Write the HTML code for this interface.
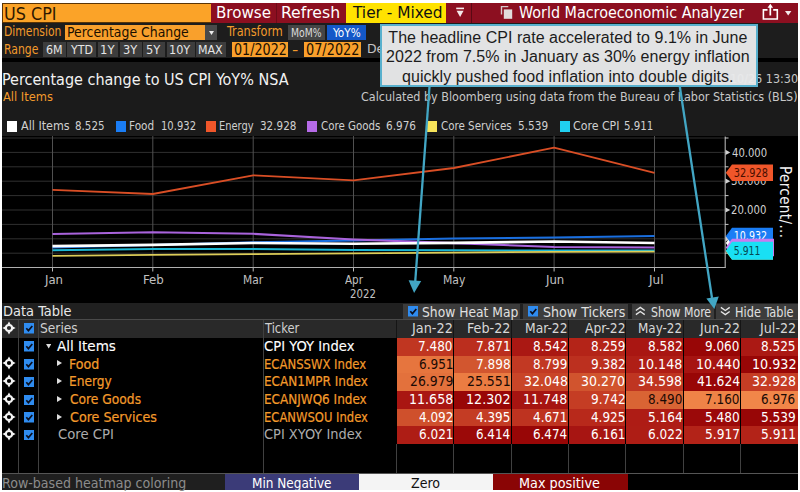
<!DOCTYPE html>
<html><head><meta charset="utf-8"><title>US CPI</title>
<style>
html,body{margin:0;padding:0;background:#fff;}
body{width:800px;height:492px;position:relative;overflow:hidden;font-family:"DejaVu Sans Condensed","Liberation Sans",sans-serif;}
#app{position:absolute;left:2px;top:2.6px;width:796px;height:487.4px;background:#000;}
.b{position:absolute;display:block;}
.t{position:absolute;white-space:nowrap;height:20px;line-height:20px;font-family:"DejaVu Sans Condensed","Liberation Sans",sans-serif;transform-origin:0 50%;}
#note{position:absolute;left:380.3px;top:24px;width:371.1px;height:56.8px;padding-right:2.4px;letter-spacing:0.03px;border:2px solid #58b0cd;background:rgba(232,233,234,0.97);color:#1c1c1c;font-family:"Liberation Sans",sans-serif;font-size:16px;line-height:19.2px;text-align:center;padding-top:2.2px;box-sizing:content-box;}
</style></head><body>
<div id="app"></div>
<!-- title bar -->
<div class="b" style="left:2px;top:2.6px;width:209px;height:20px;background:#5a3405"></div>
<div class="b" style="left:3px;top:3.6px;width:208px;height:18.7px;background:#fba328"></div>
<div class="b" style="left:211px;top:2.8px;width:587px;height:20.2px;background:#8c0f20"></div>
<div class="b" style="left:276px;top:3px;width:1px;height:20px;background:#6d0b18"></div>
<div class="b" style="left:345.5px;top:3px;width:100.3px;height:20px;background:#ffe200"></div>
<div class="b" style="left:470.5px;top:3px;width:1.2px;height:20px;background:#5a0913"></div>
<!-- toolbar rows -->
<div class="b" style="left:2px;top:22.5px;width:796px;height:35px;background:#1d1d1d"></div>
<div class="b" style="left:211px;top:23px;width:587px;height:1px;background:#1d1d1d"></div>
<div class="b" style="left:65.4px;top:25px;width:140px;height:14.5px;background:#f9a02c"></div>
<div class="b" style="left:205.3px;top:25px;width:11.7px;height:14.5px;background:#4a4a4a"></div>
<svg class="b" style="left:208.6px;top:31px" width="5" height="4" viewBox="0 0 5 4"><path d="M0 0H5L2.5 4Z" fill="#eee"/></svg>
<div class="b" style="left:287.5px;top:25px;width:37.3px;height:14.5px;background:#454545"></div>
<div class="b" style="left:327px;top:25px;width:39.3px;height:14.5px;background:#1458c8"></div>
<div class="b" style="left:42.6px;top:42px;width:23.2px;height:14.5px;background:#3d3d3d"></div>
<div class="b" style="left:67.3px;top:42px;width:28.7px;height:14.5px;background:#3d3d3d"></div>
<div class="b" style="left:97.6px;top:42px;width:20.8px;height:14.5px;background:#3d3d3d"></div>
<div class="b" style="left:120.0px;top:42px;width:21.5px;height:14.5px;background:#3d3d3d"></div>
<div class="b" style="left:143.3px;top:42px;width:21.5px;height:14.5px;background:#3d3d3d"></div>
<div class="b" style="left:166.5px;top:42px;width:28.0px;height:14.5px;background:#3d3d3d"></div>
<div class="b" style="left:196.0px;top:42px;width:30.0px;height:14.5px;background:#3d3d3d"></div>
<div class="b" style="left:232.4px;top:42px;width:55.2px;height:15px;background:#f9a02c"></div>
<div class="b" style="left:304.4px;top:42px;width:56.4px;height:15px;background:#f9a02c"></div>
<!-- chart header -->
<div class="b" style="left:2px;top:62px;width:796px;height:74px;background:#1b1b1b"></div>
<div class="b" style="left:7.4px;top:121px;width:10px;height:10.5px;background:#ffffff"></div>
<div class="b" style="left:115.5px;top:121px;width:10px;height:10.5px;background:#1a7df5"></div>
<div class="b" style="left:206.3px;top:121px;width:10px;height:10.5px;background:#f0562a"></div>
<div class="b" style="left:307.3px;top:121px;width:10px;height:10.5px;background:#b66be8"></div>
<div class="b" style="left:427.3px;top:121px;width:10px;height:10.5px;background:#f7e45a"></div>
<div class="b" style="left:560.0px;top:121px;width:10px;height:10.5px;background:#20d0f0"></div>
<!-- top icons -->
<svg class="b" style="left:455px;top:6px" width="11" height="13" viewBox="0 0 11 13"><rect x="1.2" y="1.6" width="7.8" height="1.6" fill="#f4e9ea"/><path d="M1.6 4.8H8.6L5.1 11Z" fill="#f4e9ea"/></svg>
<svg class="b" style="left:500px;top:5px" width="14" height="15" viewBox="0 0 14 15"><path d="M1.5 9.5V1.6H8.3" fill="none" stroke="#d9c9cb" stroke-width="1.4"/><rect x="3.8" y="4.4" width="8.4" height="9.4" fill="#e2dcdc"/></svg>
<svg class="b" style="left:761px;top:3px" width="19" height="18" viewBox="0 0 19 18"><path d="M6.5 6.9H2.4V16H16.3V6.9H12.2" fill="none" stroke="#fff" stroke-width="1.6"/><path d="M9.3 12.5V3.5" stroke="#fff" stroke-width="1.7"/><path d="M6.5 4.8L9.3 0.8L12.1 4.8Z" fill="#fff"/></svg>
<svg class="b" style="left:785px;top:11px" width="7" height="5" viewBox="0 0 7 5"><path d="M0 0H6.4L3.2 4.6Z" fill="#f4e9ea"/></svg>
<!-- data table -->
<div class="b" style="left:2px;top:302.5px;width:796px;height:17px;background:#202020"></div>
<div class="b" style="left:403.4px;top:304px;width:116.6px;height:15px;background:#3c3c3c"></div>
<div class="b" style="left:522.8px;top:304px;width:105.5px;height:15px;background:#3c3c3c"></div>
<div class="b" style="left:631.8px;top:304px;width:82px;height:15px;background:#3c3c3c"></div>
<div class="b" style="left:716.3px;top:304px;width:81.7px;height:15px;background:#3c3c3c"></div>
<div class="b" style="left:2px;top:319.4px;width:796px;height:1px;background:#4a4a4a"></div>
<div class="b" style="left:2px;top:320.4px;width:796px;height:17.4px;background:#292929"></div>
<div class="b" style="left:397.0px;top:338.0px;width:56.4px;height:18.0px;background:rgb(192,54,33)"></div>
<div class="b" style="left:454.4px;top:338.0px;width:56.4px;height:18.0px;background:rgb(187,46,30)"></div>
<div class="b" style="left:511.7px;top:338.0px;width:56.4px;height:18.0px;background:rgb(170,24,19)"></div>
<div class="b" style="left:569.1px;top:338.0px;width:56.4px;height:18.0px;background:rgb(180,36,24)"></div>
<div class="b" style="left:626.4px;top:338.0px;width:56.4px;height:18.0px;background:rgb(169,22,18)"></div>
<div class="b" style="left:683.8px;top:338.0px;width:56.4px;height:18.0px;background:rgb(152,6,6)"></div>
<div class="b" style="left:741.2px;top:338.0px;width:56.4px;height:18.0px;background:rgb(171,25,20)"></div>
<div class="b" style="left:397.0px;top:355.7px;width:56.4px;height:18.0px;background:rgb(230,117,62)"></div>
<div class="b" style="left:454.4px;top:355.7px;width:56.4px;height:18.0px;background:rgb(210,86,47)"></div>
<div class="b" style="left:511.7px;top:355.7px;width:56.4px;height:18.0px;background:rgb(194,57,35)"></div>
<div class="b" style="left:569.1px;top:355.7px;width:56.4px;height:18.0px;background:rgb(188,48,31)"></div>
<div class="b" style="left:626.4px;top:355.7px;width:56.4px;height:18.0px;background:rgb(175,30,22)"></div>
<div class="b" style="left:683.8px;top:355.7px;width:56.4px;height:18.0px;background:rgb(166,20,17)"></div>
<div class="b" style="left:741.2px;top:355.7px;width:56.4px;height:18.0px;background:rgb(152,6,6)"></div>
<div class="b" style="left:397.0px;top:373.4px;width:56.4px;height:18.0px;background:rgb(227,113,60)"></div>
<div class="b" style="left:454.4px;top:373.4px;width:56.4px;height:18.0px;background:rgb(235,124,66)"></div>
<div class="b" style="left:511.7px;top:373.4px;width:56.4px;height:18.0px;background:rgb(201,69,40)"></div>
<div class="b" style="left:569.1px;top:373.4px;width:56.4px;height:18.0px;background:rgb(209,84,46)"></div>
<div class="b" style="left:626.4px;top:373.4px;width:56.4px;height:18.0px;background:rgb(191,53,33)"></div>
<div class="b" style="left:683.8px;top:373.4px;width:56.4px;height:18.0px;background:rgb(152,6,6)"></div>
<div class="b" style="left:741.2px;top:373.4px;width:56.4px;height:18.0px;background:rgb(197,61,36)"></div>
<div class="b" style="left:397.0px;top:391.0px;width:56.4px;height:18.0px;background:rgb(169,22,18)"></div>
<div class="b" style="left:454.4px;top:391.0px;width:56.4px;height:18.0px;background:rgb(152,6,6)"></div>
<div class="b" style="left:511.7px;top:391.0px;width:56.4px;height:18.0px;background:rgb(166,20,17)"></div>
<div class="b" style="left:569.1px;top:391.0px;width:56.4px;height:18.0px;background:rgb(197,61,36)"></div>
<div class="b" style="left:626.4px;top:391.0px;width:56.4px;height:18.0px;background:rgb(217,100,52)"></div>
<div class="b" style="left:683.8px;top:391.0px;width:56.4px;height:18.0px;background:rgb(239,131,71)"></div>
<div class="b" style="left:741.2px;top:391.0px;width:56.4px;height:18.0px;background:rgb(241,134,73)"></div>
<div class="b" style="left:397.0px;top:408.7px;width:56.4px;height:18.0px;background:rgb(207,80,44)"></div>
<div class="b" style="left:454.4px;top:408.7px;width:56.4px;height:18.0px;background:rgb(196,60,36)"></div>
<div class="b" style="left:511.7px;top:408.7px;width:56.4px;height:18.0px;background:rgb(190,51,32)"></div>
<div class="b" style="left:569.1px;top:408.7px;width:56.4px;height:18.0px;background:rgb(184,41,27)"></div>
<div class="b" style="left:626.4px;top:408.7px;width:56.4px;height:18.0px;background:rgb(174,28,21)"></div>
<div class="b" style="left:683.8px;top:408.7px;width:56.4px;height:18.0px;background:rgb(155,9,9)"></div>
<div class="b" style="left:741.2px;top:408.7px;width:56.4px;height:18.0px;background:rgb(152,6,6)"></div>
<div class="b" style="left:397.0px;top:426.4px;width:56.4px;height:18.0px;background:rgb(174,29,21)"></div>
<div class="b" style="left:454.4px;top:426.4px;width:56.4px;height:18.0px;background:rgb(155,9,8)"></div>
<div class="b" style="left:511.7px;top:426.4px;width:56.4px;height:18.0px;background:rgb(152,6,6)"></div>
<div class="b" style="left:569.1px;top:426.4px;width:56.4px;height:18.0px;background:rgb(167,21,18)"></div>
<div class="b" style="left:626.4px;top:426.4px;width:56.4px;height:18.0px;background:rgb(174,29,21)"></div>
<div class="b" style="left:683.8px;top:426.4px;width:56.4px;height:18.0px;background:rgb(179,35,24)"></div>
<div class="b" style="left:741.2px;top:426.4px;width:56.4px;height:18.0px;background:rgb(179,35,24)"></div>
<div class="b" style="left:17.8px;top:320px;width:1px;height:153px;background:#404040"></div>
<div class="b" style="left:38.4px;top:320px;width:1px;height:153px;background:#404040"></div>
<div class="b" style="left:262.7px;top:320px;width:1px;height:153px;background:#404040"></div>
<div class="b" style="left:396.0px;top:320px;width:1px;height:18px;background:#151515"></div>
<div class="b" style="left:396.0px;top:444px;width:1px;height:29px;background:#404040"></div>
<div class="b" style="left:453.4px;top:320px;width:1px;height:18px;background:#151515"></div>
<div class="b" style="left:453.4px;top:444px;width:1px;height:29px;background:#404040"></div>
<div class="b" style="left:510.7px;top:320px;width:1px;height:18px;background:#151515"></div>
<div class="b" style="left:510.7px;top:444px;width:1px;height:29px;background:#404040"></div>
<div class="b" style="left:568.1px;top:320px;width:1px;height:18px;background:#151515"></div>
<div class="b" style="left:568.1px;top:444px;width:1px;height:29px;background:#404040"></div>
<div class="b" style="left:625.4px;top:320px;width:1px;height:18px;background:#151515"></div>
<div class="b" style="left:625.4px;top:444px;width:1px;height:29px;background:#404040"></div>
<div class="b" style="left:682.8px;top:320px;width:1px;height:18px;background:#151515"></div>
<div class="b" style="left:682.8px;top:444px;width:1px;height:29px;background:#404040"></div>
<div class="b" style="left:740.2px;top:320px;width:1px;height:18px;background:#151515"></div>
<div class="b" style="left:740.2px;top:444px;width:1px;height:29px;background:#404040"></div>
<svg class="b" style="left:23.8px;top:323.2px" width="10.5" height="10.5" viewBox="0 0 10.5 10.5"><rect width="10.5" height="10.5" fill="#2f8cf0"/><path d="M2.3 5.3 L4.4 7.6 L8.3 3" fill="none" stroke="#0a1020" stroke-width="1.7"/></svg>
<svg class="b" style="left:2.3px;top:321.2px" width="14" height="14" viewBox="-7 -7 14 14"><circle r="3.1" fill="none" stroke="#f4f4f4" stroke-width="2"/><path d="M0 -6.6 L1.7 -3.4 H-1.7Z M0 6.6 L1.7 3.4 H-1.7Z M-6.6 0 L-3.4 1.7 V-1.7Z M6.6 0 L3.4 1.7 V-1.7Z" fill="#f4f4f4"/></svg>
<svg class="b" style="left:23.8px;top:341.4px" width="10.5" height="10.5" viewBox="0 0 10.5 10.5"><rect width="10.5" height="10.5" fill="#2f8cf0"/><path d="M2.3 5.3 L4.4 7.6 L8.3 3" fill="none" stroke="#0a1020" stroke-width="1.7"/></svg>
<svg class="b" style="left:23.8px;top:359.1px" width="10.5" height="10.5" viewBox="0 0 10.5 10.5"><rect width="10.5" height="10.5" fill="#2f8cf0"/><path d="M2.3 5.3 L4.4 7.6 L8.3 3" fill="none" stroke="#0a1020" stroke-width="1.7"/></svg>
<svg class="b" style="left:2.3px;top:356.4px" width="14" height="14" viewBox="-7 -7 14 14"><circle r="3.1" fill="none" stroke="#f4f4f4" stroke-width="2"/><path d="M0 -6.6 L1.7 -3.4 H-1.7Z M0 6.6 L1.7 3.4 H-1.7Z M-6.6 0 L-3.4 1.7 V-1.7Z M6.6 0 L3.4 1.7 V-1.7Z" fill="#f4f4f4"/></svg>
<svg class="b" style="left:23.8px;top:376.8px" width="10.5" height="10.5" viewBox="0 0 10.5 10.5"><rect width="10.5" height="10.5" fill="#2f8cf0"/><path d="M2.3 5.3 L4.4 7.6 L8.3 3" fill="none" stroke="#0a1020" stroke-width="1.7"/></svg>
<svg class="b" style="left:2.3px;top:374.1px" width="14" height="14" viewBox="-7 -7 14 14"><circle r="3.1" fill="none" stroke="#f4f4f4" stroke-width="2"/><path d="M0 -6.6 L1.7 -3.4 H-1.7Z M0 6.6 L1.7 3.4 H-1.7Z M-6.6 0 L-3.4 1.7 V-1.7Z M6.6 0 L3.4 1.7 V-1.7Z" fill="#f4f4f4"/></svg>
<svg class="b" style="left:23.8px;top:394.5px" width="10.5" height="10.5" viewBox="0 0 10.5 10.5"><rect width="10.5" height="10.5" fill="#2f8cf0"/><path d="M2.3 5.3 L4.4 7.6 L8.3 3" fill="none" stroke="#0a1020" stroke-width="1.7"/></svg>
<svg class="b" style="left:2.3px;top:391.8px" width="14" height="14" viewBox="-7 -7 14 14"><circle r="3.1" fill="none" stroke="#f4f4f4" stroke-width="2"/><path d="M0 -6.6 L1.7 -3.4 H-1.7Z M0 6.6 L1.7 3.4 H-1.7Z M-6.6 0 L-3.4 1.7 V-1.7Z M6.6 0 L3.4 1.7 V-1.7Z" fill="#f4f4f4"/></svg>
<svg class="b" style="left:23.8px;top:412.2px" width="10.5" height="10.5" viewBox="0 0 10.5 10.5"><rect width="10.5" height="10.5" fill="#2f8cf0"/><path d="M2.3 5.3 L4.4 7.6 L8.3 3" fill="none" stroke="#0a1020" stroke-width="1.7"/></svg>
<svg class="b" style="left:2.3px;top:409.5px" width="14" height="14" viewBox="-7 -7 14 14"><circle r="3.1" fill="none" stroke="#f4f4f4" stroke-width="2"/><path d="M0 -6.6 L1.7 -3.4 H-1.7Z M0 6.6 L1.7 3.4 H-1.7Z M-6.6 0 L-3.4 1.7 V-1.7Z M6.6 0 L3.4 1.7 V-1.7Z" fill="#f4f4f4"/></svg>
<svg class="b" style="left:23.8px;top:429.8px" width="10.5" height="10.5" viewBox="0 0 10.5 10.5"><rect width="10.5" height="10.5" fill="#2f8cf0"/><path d="M2.3 5.3 L4.4 7.6 L8.3 3" fill="none" stroke="#0a1020" stroke-width="1.7"/></svg>
<svg class="b" style="left:2.3px;top:427.1px" width="14" height="14" viewBox="-7 -7 14 14"><circle r="3.1" fill="none" stroke="#f4f4f4" stroke-width="2"/><path d="M0 -6.6 L1.7 -3.4 H-1.7Z M0 6.6 L1.7 3.4 H-1.7Z M-6.6 0 L-3.4 1.7 V-1.7Z M6.6 0 L3.4 1.7 V-1.7Z" fill="#f4f4f4"/></svg>
<svg class="b" style="left:407.5px;top:306.3px" width="10.5" height="10.5" viewBox="0 0 10.5 10.5"><rect width="10.5" height="10.5" fill="#2f8cf0"/><path d="M2.3 5.3 L4.4 7.6 L8.3 3" fill="none" stroke="#0a1020" stroke-width="1.7"/></svg>
<svg class="b" style="left:527.5px;top:306.3px" width="10.5" height="10.5" viewBox="0 0 10.5 10.5"><rect width="10.5" height="10.5" fill="#2f8cf0"/><path d="M2.3 5.3 L4.4 7.6 L8.3 3" fill="none" stroke="#0a1020" stroke-width="1.7"/></svg>
<svg class="b" style="left:45.6px;top:344.3px" width="5.4" height="4.4" viewBox="0 0 6 5"><path d="M0 0H6L3 5Z" fill="#ddd"/></svg>
<svg class="b" style="left:57.3px;top:360.4px" width="5" height="6" viewBox="0 0 5 6"><path d="M0 0V6L5 3Z" fill="#ddd"/></svg>
<svg class="b" style="left:57.3px;top:378.1px" width="5" height="6" viewBox="0 0 5 6"><path d="M0 0V6L5 3Z" fill="#ddd"/></svg>
<svg class="b" style="left:57.3px;top:395.8px" width="5" height="6" viewBox="0 0 5 6"><path d="M0 0V6L5 3Z" fill="#ddd"/></svg>
<svg class="b" style="left:57.3px;top:413.5px" width="5" height="6" viewBox="0 0 5 6"><path d="M0 0V6L5 3Z" fill="#ddd"/></svg>
<svg class="b" style="left:635.2px;top:306.3px" width="10.6" height="10" viewBox="0 0 12 11"><path d="M1 5L6 1.4L11 5M1 9.6L6 6L11 9.6" fill="none" stroke="#e6e6e6" stroke-width="1.5"/></svg>
<svg class="b" style="left:720px;top:306.3px" width="10.6" height="10" viewBox="0 0 12 11"><path d="M1 1.4L6 5L11 1.4M1 6L6 9.6L11 6" fill="none" stroke="#e6e6e6" stroke-width="1.5"/></svg>
<!-- footer -->
<div class="b" style="left:2px;top:472.6px;width:796px;height:1px;background:#555"></div>
<div class="b" style="left:2px;top:473.6px;width:223px;height:16.4px;background:#1f1f1f"></div>
<div class="b" style="left:225px;top:474.4px;width:133.6px;height:15.4px;background:#3b3b78"></div>
<div class="b" style="left:358.6px;top:474.4px;width:134px;height:15.4px;background:#f4f4f4"></div>
<div class="b" style="left:492.6px;top:474.4px;width:135px;height:15.4px;background:#8a0505"></div>
<!-- chart -->
<svg class="b" style="left:0;top:0" width="800" height="492" viewBox="0 0 800 492">
<line x1="2" x2="725" y1="253.2" y2="253.2" stroke="#303030" stroke-width="1"/>
<line x1="2" x2="725" y1="238.8" y2="238.8" stroke="#303030" stroke-width="1"/>
<line x1="2" x2="725" y1="224.4" y2="224.4" stroke="#303030" stroke-width="1"/>
<line x1="2" x2="725" y1="210.0" y2="210.0" stroke="#303030" stroke-width="1"/>
<line x1="2" x2="725" y1="195.6" y2="195.6" stroke="#303030" stroke-width="1"/>
<line x1="2" x2="725" y1="181.2" y2="181.2" stroke="#303030" stroke-width="1"/>
<line x1="2" x2="725" y1="166.8" y2="166.8" stroke="#303030" stroke-width="1"/>
<line x1="2" x2="725" y1="152.4" y2="152.4" stroke="#303030" stroke-width="1"/>
<line x1="2" x2="725" y1="138.0" y2="138.0" stroke="#303030" stroke-width="1"/>
<line x1="52.5" x2="52.5" y1="136" y2="267.5" stroke="#505050" stroke-width="1"/>
<line x1="52.5" x2="52.5" y1="267.5" y2="271.5" stroke="#bbb" stroke-width="1"/>
<line x1="152.8" x2="152.8" y1="136" y2="267.5" stroke="#505050" stroke-width="1"/>
<line x1="152.8" x2="152.8" y1="267.5" y2="271.5" stroke="#bbb" stroke-width="1"/>
<line x1="253.2" x2="253.2" y1="136" y2="267.5" stroke="#505050" stroke-width="1"/>
<line x1="253.2" x2="253.2" y1="267.5" y2="271.5" stroke="#bbb" stroke-width="1"/>
<line x1="353.5" x2="353.5" y1="136" y2="267.5" stroke="#505050" stroke-width="1"/>
<line x1="353.5" x2="353.5" y1="267.5" y2="271.5" stroke="#bbb" stroke-width="1"/>
<line x1="453.8" x2="453.8" y1="136" y2="267.5" stroke="#505050" stroke-width="1"/>
<line x1="453.8" x2="453.8" y1="267.5" y2="271.5" stroke="#bbb" stroke-width="1"/>
<line x1="554.1" x2="554.1" y1="136" y2="267.5" stroke="#505050" stroke-width="1"/>
<line x1="554.1" x2="554.1" y1="267.5" y2="271.5" stroke="#bbb" stroke-width="1"/>
<line x1="654.5" x2="654.5" y1="136" y2="267.5" stroke="#505050" stroke-width="1"/>
<line x1="654.5" x2="654.5" y1="267.5" y2="271.5" stroke="#bbb" stroke-width="1"/>
<polyline points="52.5,250.3 152.8,249.1 253.2,249.0 353.5,249.9 453.8,250.3 554.1,250.6 654.5,250.6" fill="none" stroke="#1cb8d4" stroke-width="2" stroke-linejoin="round"/>
<polyline points="52.5,255.8 152.8,254.9 253.2,254.1 353.5,253.4 453.8,252.7 554.1,251.8 654.5,251.6" fill="none" stroke="#dccc58" stroke-width="1.7" stroke-linejoin="round"/>
<polyline points="52.5,247.6 152.8,244.9 253.2,242.3 353.5,240.6 453.8,238.4 554.1,237.5 654.5,236.1" fill="none" stroke="#1a6fe0" stroke-width="2" stroke-linejoin="round"/>
<polyline points="52.5,234.0 152.8,232.2 253.2,233.8 353.5,239.5 453.8,243.1 554.1,247.0 654.5,247.5" fill="none" stroke="#a963dc" stroke-width="2.1" stroke-linejoin="round"/>
<polyline points="52.5,189.9 152.8,194.0 253.2,175.3 353.5,180.4 453.8,168.0 554.1,147.7 654.5,172.8" fill="none" stroke="#d94e25" stroke-width="1.8" stroke-linejoin="round"/>
<polyline points="52.5,246.1 152.8,244.9 253.2,243.0 353.5,243.8 453.8,242.9 554.1,241.5 654.5,243.0" fill="none" stroke="#ffffff" stroke-width="2.6" stroke-linejoin="round"/>
<line x1="2" x2="725.5" y1="267.5" y2="267.5" stroke="#b0b0b0" stroke-width="1.1"/>
<line x1="725.2" x2="725.2" y1="136.5" y2="268" stroke="#b0b0b0" stroke-width="1.1"/>
<line x1="725" x2="728.5" y1="253.2" y2="253.2" stroke="#c8c8c8"/>
<path d="M725.5 238.8 v-2.6 l4.8 2.6 l-4.8 2.6z" fill="#d0d0d0"/>
<line x1="725" x2="728.5" y1="224.4" y2="224.4" stroke="#c8c8c8"/>
<path d="M725.5 210.0 v-2.6 l4.8 2.6 l-4.8 2.6z" fill="#d0d0d0"/>
<line x1="725" x2="728.5" y1="195.6" y2="195.6" stroke="#c8c8c8"/>
<path d="M725.5 181.2 v-2.6 l4.8 2.6 l-4.8 2.6z" fill="#d0d0d0"/>
<line x1="725" x2="728.5" y1="166.8" y2="166.8" stroke="#c8c8c8"/>
<path d="M725.5 152.4 v-2.6 l4.8 2.6 l-4.8 2.6z" fill="#d0d0d0"/>
<line x1="725" x2="728.5" y1="138.0" y2="138.0" stroke="#c8c8c8"/>
</svg>
<span class="t" style="left:4.3px;top:3.7px;font-size:16.8px;color:#2e1800;transform:scaleX(1.060);">US CPI</span>
<span class="t" style="left:216.0px;top:3.0px;font-size:16.5px;color:#fff;transform:scaleX(1.018);">Browse</span>
<span class="t" style="left:281.0px;top:3.0px;font-size:16.5px;color:#fff;transform:scaleX(1.056);">Refresh</span>
<span class="t" style="left:352.7px;top:3.0px;font-size:16.5px;color:#111;transform:scaleX(1.036);">Tier - Mixed</span>
<span class="t" style="left:519.0px;top:3.0px;font-size:16.5px;color:#fff;transform:scaleX(0.966);">World Macroeconomic Analyzer</span>
<span class="t" style="left:3.9px;top:21.0px;font-size:14.5px;color:#f39a2b;transform:scaleX(0.828);">Dimension</span>
<span class="t" style="left:66.8px;top:22.3px;font-size:14.5px;color:#1a0f00;transform:scaleX(0.956);">Percentage Change</span>
<span class="t" style="left:226.9px;top:21.0px;font-size:14.5px;color:#f39a2b;transform:scaleX(0.864);">Transform</span>
<span class="t" style="left:291.1px;top:22.5px;font-size:13px;color:#ddd;transform:scaleX(0.794);">MoM%</span>
<span class="t" style="left:332.7px;top:22.5px;font-size:13px;color:#fff;transform:scaleX(0.899);">YoY%</span>
<span class="t" style="left:3.9px;top:39.0px;font-size:14.5px;color:#f39a2b;transform:scaleX(0.832);">Range</span>
<span class="t" style="left:46.0px;top:39.5px;font-size:13px;color:#e6e6e6;transform:scaleX(0.945);">6M</span>
<span class="t" style="left:70.9px;top:39.5px;font-size:13px;color:#e6e6e6;transform:scaleX(0.940);">YTD</span>
<span class="t" style="left:100.1px;top:39.5px;font-size:13px;color:#e6e6e6;transform:scaleX(0.995);">1Y</span>
<span class="t" style="left:123.0px;top:39.5px;font-size:13px;color:#e6e6e6;transform:scaleX(0.980);">3Y</span>
<span class="t" style="left:146.3px;top:39.5px;font-size:13px;color:#e6e6e6;transform:scaleX(0.980);">5Y</span>
<span class="t" style="left:169.1px;top:39.5px;font-size:13px;color:#e6e6e6;transform:scaleX(0.965);">10Y</span>
<span class="t" style="left:198.4px;top:39.5px;font-size:13px;color:#e6e6e6;transform:scaleX(0.946);">MAX</span>
<span class="t" style="left:234.3px;top:39.5px;font-size:15.5px;color:#1a0f00;transform:scaleX(0.914);">01/2022</span>
<span class="t" style="left:292.2px;top:39.5px;font-size:14px;color:#f39a2b;transform:scaleX(1.390);">-</span>
<span class="t" style="left:306.3px;top:39.5px;font-size:15.5px;color:#1a0f00;transform:scaleX(0.923);">07/2022</span>
<span class="t" style="left:366.7px;top:39.2px;font-size:13px;color:#c4c4c4;transform:scaleX(1.068);">De</span>
<span class="t" style="left:1.6px;top:70.0px;font-size:16.5px;color:#f2f2f2;transform:scaleX(0.970);">Percentage change to US CPI YoY% NSA</span>
<span class="t" style="left:2.7px;top:86.5px;font-size:12.5px;color:#f39a2b;transform:scaleX(1.019);">All Items</span>
<span class="t" style="left:361.4px;top:86.5px;font-size:12.5px;color:#c8c8c8;transform:scaleX(0.996);">Calculated by Bloomberg using data from the Bureau of Labor Statistics (BLS)</span>
<span class="t" style="left:729.6px;top:68.5px;font-size:12.5px;color:#c8c8c8;transform:scaleX(0.995);">10/26 13:30</span>
<span class="t" style="left:21.2px;top:116.3px;font-size:12.5px;color:#d0d0d0;transform:scaleX(0.994);">All Items</span>
<span class="t" style="left:75.3px;top:116.3px;font-size:12.5px;color:#d0d0d0;transform:scaleX(0.916);">8.525</span>
<span class="t" style="left:129.3px;top:116.3px;font-size:12.5px;color:#d0d0d0;transform:scaleX(0.934);">Food</span>
<span class="t" style="left:160.5px;top:116.3px;font-size:12.5px;color:#d0d0d0;transform:scaleX(0.890);">10.932</span>
<span class="t" style="left:219.3px;top:116.3px;font-size:12.5px;color:#d0d0d0;transform:scaleX(0.878);">Energy</span>
<span class="t" style="left:260.4px;top:116.3px;font-size:12.5px;color:#d0d0d0;transform:scaleX(0.925);">32.928</span>
<span class="t" style="left:321.0px;top:116.3px;font-size:12.5px;color:#d0d0d0;transform:scaleX(0.912);">Core Goods</span>
<span class="t" style="left:386.3px;top:116.3px;font-size:12.5px;color:#d0d0d0;transform:scaleX(0.932);">6.976</span>
<span class="t" style="left:441.2px;top:116.3px;font-size:12.5px;color:#d0d0d0;transform:scaleX(0.917);">Core Services</span>
<span class="t" style="left:518.1px;top:116.3px;font-size:12.5px;color:#d0d0d0;transform:scaleX(0.935);">5.539</span>
<span class="t" style="left:572.6px;top:116.3px;font-size:12.5px;color:#d0d0d0;transform:scaleX(0.978);">Core CPI</span>
<span class="t" style="left:623.9px;top:116.3px;font-size:12.5px;color:#d0d0d0;transform:scaleX(0.910);">5.911</span>
<span class="t" style="left:731.5px;top:142.8px;font-size:11.5px;color:#d0d0d0;transform:scaleX(0.971);">40.000</span>
<span class="t" style="left:731.3px;top:199.9px;font-size:11.5px;color:#d0d0d0;transform:scaleX(0.977);">20.000</span>
<span class="t" style="left:731.2px;top:171.3px;font-size:11.5px;color:#d0d0d0;transform:scaleX(0.980);">30.000</span>
<span class="t" style="left:44.6px;top:270.3px;font-size:11.5px;color:#c0c0c0;transform:scaleX(1.131);">Jan</span>
<span class="t" style="left:142.6px;top:270.3px;font-size:11.5px;color:#c0c0c0;transform:scaleX(1.142);">Feb</span>
<span class="t" style="left:243.0px;top:270.3px;font-size:11.5px;color:#c0c0c0;transform:scaleX(1.028);">Mar</span>
<span class="t" style="left:344.7px;top:270.3px;font-size:11.5px;color:#c0c0c0;transform:scaleX(1.004);">Apr</span>
<span class="t" style="left:442.7px;top:270.3px;font-size:11.5px;color:#c0c0c0;transform:scaleX(1.047);">May</span>
<span class="t" style="left:546.3px;top:270.3px;font-size:11.5px;color:#c0c0c0;transform:scaleX(1.131);">Jun</span>
<span class="t" style="left:648.6px;top:270.3px;font-size:11.5px;color:#c0c0c0;transform:scaleX(1.159);">Jul</span>
<span class="t" style="left:350.0px;top:284.4px;font-size:11.5px;color:#c0c0c0;transform:scaleX(0.982);">2022</span>
<span class="t" style="left:2.7px;top:301.3px;font-size:14.5px;color:#e8e8e8;transform:scaleX(0.996);">Data Table</span>
<span class="t" style="left:421.8px;top:301.5px;font-size:14px;color:#e0e0e0;transform:scaleX(0.978);">Show Heat Map</span>
<span class="t" style="left:543.4px;top:301.5px;font-size:14px;color:#e0e0e0;transform:scaleX(1.005);">Show Tickers</span>
<span class="t" style="left:651.3px;top:301.5px;font-size:13.5px;color:#e0e0e0;transform:scaleX(0.901);">Show More</span>
<span class="t" style="left:734.8px;top:301.5px;font-size:13.5px;color:#e0e0e0;transform:scaleX(0.934);">Hide Table</span>
<span class="t" style="left:39.6px;top:317.9px;font-size:14px;color:#d0d0d0;transform:scaleX(0.974);">Series</span>
<span class="t" style="left:264.8px;top:317.9px;font-size:14px;color:#d0d0d0;transform:scaleX(0.917);">Ticker</span>
<span class="t" style="left:412.1px;top:317.9px;font-size:14px;color:#d8d8d8;transform:scaleX(1.023);">Jan-22</span>
<span class="t" style="left:467.0px;top:317.9px;font-size:14px;color:#d8d8d8;transform:scaleX(1.015);">Feb-22</span>
<span class="t" style="left:525.1px;top:317.9px;font-size:14px;color:#d8d8d8;transform:scaleX(0.979);">Mar-22</span>
<span class="t" style="left:584.5px;top:317.9px;font-size:14px;color:#d8d8d8;transform:scaleX(0.977);">Apr-22</span>
<span class="t" style="left:638.4px;top:317.9px;font-size:14px;color:#d8d8d8;transform:scaleX(0.949);">May-22</span>
<span class="t" style="left:699.8px;top:317.9px;font-size:14px;color:#d8d8d8;transform:scaleX(0.991);">Jun-22</span>
<span class="t" style="left:759.7px;top:317.9px;font-size:14px;color:#d8d8d8;transform:scaleX(1.012);">Jul-22</span>
<span class="t" style="left:57.1px;top:336.0px;font-size:14.5px;color:#ffffff;transform:scaleX(1.037);-webkit-text-stroke:0.1px;">All Items</span>
<span class="t" style="left:263.9px;top:336.0px;font-size:14.5px;color:#ffffff;transform:scaleX(1.009);-webkit-text-stroke:0.1px;">CPI YOY Index</span>
<span class="t" style="left:418.2px;top:335.9px;font-size:14.5px;color:#fff;transform:scaleX(0.925);">7.480</span>
<span class="t" style="left:475.6px;top:335.9px;font-size:14.5px;color:#fff;transform:scaleX(0.933);">7.871</span>
<span class="t" style="left:533.2px;top:335.9px;font-size:14.5px;color:#fff;transform:scaleX(0.927);">8.542</span>
<span class="t" style="left:590.6px;top:335.9px;font-size:14.5px;color:#fff;transform:scaleX(0.919);">8.259</span>
<span class="t" style="left:647.9px;top:335.9px;font-size:14.5px;color:#fff;transform:scaleX(0.927);">8.582</span>
<span class="t" style="left:705.3px;top:335.9px;font-size:14.5px;color:#fff;transform:scaleX(0.917);">9.060</span>
<span class="t" style="left:761.2px;top:335.9px;font-size:14.5px;color:#fff;transform:scaleX(0.924);">8.525</span>
<span class="t" style="left:69.1px;top:353.7px;font-size:14.5px;color:#f39a2b;transform:scaleX(0.970);-webkit-text-stroke:0.2px;">Food</span>
<span class="t" style="left:263.5px;top:353.7px;font-size:14.5px;color:#f39a2b;transform:scaleX(0.892);-webkit-text-stroke:0.2px;">ECANSSWX Index</span>
<span class="t" style="left:418.5px;top:353.6px;font-size:14.5px;color:#1a0a05;transform:scaleX(0.924);">6.951</span>
<span class="t" style="left:475.6px;top:353.6px;font-size:14.5px;color:#fff;transform:scaleX(0.928);">7.898</span>
<span class="t" style="left:533.2px;top:353.6px;font-size:14.5px;color:#fff;transform:scaleX(0.919);">8.799</span>
<span class="t" style="left:590.6px;top:353.6px;font-size:14.5px;color:#fff;transform:scaleX(0.926);">9.382</span>
<span class="t" style="left:638.2px;top:353.6px;font-size:14.5px;color:#fff;transform:scaleX(0.970);">10.148</span>
<span class="t" style="left:695.5px;top:353.6px;font-size:14.5px;color:#fff;transform:scaleX(0.968);">10.440</span>
<span class="t" style="left:751.5px;top:353.6px;font-size:14.5px;color:#fff;transform:scaleX(0.976);">10.932</span>
<span class="t" style="left:69.1px;top:371.4px;font-size:14.5px;color:#f39a2b;transform:scaleX(0.938);-webkit-text-stroke:0.2px;">Energy</span>
<span class="t" style="left:263.5px;top:371.4px;font-size:14.5px;color:#f39a2b;transform:scaleX(0.923);-webkit-text-stroke:0.2px;">ECAN1MPR Index</span>
<span class="t" style="left:409.5px;top:371.3px;font-size:14.5px;color:#1a0a05;transform:scaleX(0.952);">26.979</span>
<span class="t" style="left:466.8px;top:371.3px;font-size:14.5px;color:#1a0a05;transform:scaleX(0.957);">25.551</span>
<span class="t" style="left:523.7px;top:371.3px;font-size:14.5px;color:#fff;transform:scaleX(0.963);">32.048</span>
<span class="t" style="left:581.1px;top:371.3px;font-size:14.5px;color:#fff;transform:scaleX(0.962);">30.270</span>
<span class="t" style="left:638.4px;top:371.3px;font-size:14.5px;color:#fff;transform:scaleX(0.963);">34.598</span>
<span class="t" style="left:696.5px;top:371.3px;font-size:14.5px;color:#fff;transform:scaleX(0.944);">41.624</span>
<span class="t" style="left:751.8px;top:371.3px;font-size:14.5px;color:#fff;transform:scaleX(0.963);">32.928</span>
<span class="t" style="left:69.7px;top:389.1px;font-size:14.5px;color:#f39a2b;transform:scaleX(0.942);-webkit-text-stroke:0.2px;">Core Goods</span>
<span class="t" style="left:263.5px;top:389.1px;font-size:14.5px;color:#f39a2b;transform:scaleX(0.922);-webkit-text-stroke:0.2px;">ECANJWQ6 Index</span>
<span class="t" style="left:408.7px;top:389.0px;font-size:14.5px;color:#fff;transform:scaleX(0.970);">11.658</span>
<span class="t" style="left:466.1px;top:389.0px;font-size:14.5px;color:#fff;transform:scaleX(0.976);">12.302</span>
<span class="t" style="left:523.4px;top:389.0px;font-size:14.5px;color:#fff;transform:scaleX(0.970);">11.748</span>
<span class="t" style="left:590.6px;top:389.0px;font-size:14.5px;color:#fff;transform:scaleX(0.926);">9.742</span>
<span class="t" style="left:647.9px;top:389.0px;font-size:14.5px;color:#1a0a05;transform:scaleX(0.918);">8.490</span>
<span class="t" style="left:705.0px;top:389.0px;font-size:14.5px;color:#1a0a05;transform:scaleX(0.925);">7.160</span>
<span class="t" style="left:761.3px;top:389.0px;font-size:14.5px;color:#1a0a05;transform:scaleX(0.916);">6.976</span>
<span class="t" style="left:69.7px;top:406.8px;font-size:14.5px;color:#f39a2b;transform:scaleX(0.974);-webkit-text-stroke:0.2px;">Core Services</span>
<span class="t" style="left:263.5px;top:406.8px;font-size:14.5px;color:#f39a2b;transform:scaleX(0.888);-webkit-text-stroke:0.2px;">ECANWSOU Index</span>
<span class="t" style="left:418.7px;top:406.7px;font-size:14.5px;color:#fff;transform:scaleX(0.921);">4.092</span>
<span class="t" style="left:476.1px;top:406.7px;font-size:14.5px;color:#fff;transform:scaleX(0.918);">4.395</span>
<span class="t" style="left:533.4px;top:406.7px;font-size:14.5px;color:#fff;transform:scaleX(0.919);">4.671</span>
<span class="t" style="left:590.8px;top:406.7px;font-size:14.5px;color:#fff;transform:scaleX(0.918);">4.925</span>
<span class="t" style="left:647.5px;top:406.7px;font-size:14.5px;color:#fff;transform:scaleX(0.927);">5.164</span>
<span class="t" style="left:704.8px;top:406.7px;font-size:14.5px;color:#fff;transform:scaleX(0.930);">5.480</span>
<span class="t" style="left:760.8px;top:406.7px;font-size:14.5px;color:#fff;transform:scaleX(0.932);">5.539</span>
<span class="t" style="left:57.6px;top:424.4px;font-size:14.5px;color:#acacac;transform:scaleX(1.016);">Core CPI</span>
<span class="t" style="left:263.9px;top:424.4px;font-size:14.5px;color:#acacac;transform:scaleX(0.996);">CPI XYOY Index</span>
<span class="t" style="left:418.5px;top:424.3px;font-size:14.5px;color:#fff;transform:scaleX(0.924);">6.021</span>
<span class="t" style="left:475.9px;top:424.3px;font-size:14.5px;color:#fff;transform:scaleX(0.914);">6.414</span>
<span class="t" style="left:533.2px;top:424.3px;font-size:14.5px;color:#fff;transform:scaleX(0.914);">6.474</span>
<span class="t" style="left:590.6px;top:424.3px;font-size:14.5px;color:#fff;transform:scaleX(0.924);">6.161</span>
<span class="t" style="left:648.0px;top:424.3px;font-size:14.5px;color:#fff;transform:scaleX(0.926);">6.022</span>
<span class="t" style="left:704.8px;top:424.3px;font-size:14.5px;color:#fff;transform:scaleX(0.937);">5.917</span>
<span class="t" style="left:760.8px;top:424.3px;font-size:14.5px;color:#fff;transform:scaleX(0.937);">5.911</span>
<span class="t" style="left:1.7px;top:472.5px;font-size:14px;color:#8c8c8c;transform:scaleX(1.004);">Row-based heatmap coloring</span>
<span class="t" style="left:251.8px;top:472.5px;font-size:14px;color:#fff;transform:scaleX(0.960);">Min Negative</span>
<span class="t" style="left:410.5px;top:472.5px;font-size:14px;color:#111;transform:scaleX(1.005);">Zero</span>
<span class="t" style="left:518.7px;top:472.5px;font-size:14px;color:#fff;transform:scaleX(1.018);">Max positive</span>
<span class="t" style="left:749px;top:192px;width:72px;text-align:center;font-size:15px;color:#f2f2f2;transform-origin:50% 50%;transform:rotate(90deg);letter-spacing:0.4px">Percent/...</span>
<div id="note">The headline CPI rate accelerated to 9.1% in June<br>2022 from 7.5% in January as 30% energy inflation<br>quickly pushed food inflation into double digits.</div>
<svg class="b" style="left:0;top:0;font-family:"DejaVu Sans Condensed","Liberation Sans",sans-serif" width="800" height="492" viewBox="0 0 800 492">
<path d="M725.8 243.0 L732 234.5 H773 V251.5 H732 Z" fill="#ffffff"/>
<path d="M725.8 236.2 L732 227.7 H773 V244.7 H732 Z" fill="#1a7df5"/><text x="733.8" y="240.3" textLength="33.2" lengthAdjust="spacingAndGlyphs" fill="#fff" font-size="11.5">10.932</text>
<path d="M725.8 172.7 L732 164.4 H773 V180.9 H732 Z" fill="#f0562a"/><text x="733.8" y="176.8" textLength="34.2" lengthAdjust="spacingAndGlyphs" fill="#4a0e00" font-size="11.5">32.928</text>
<path d="M725.8 247.5 L732 238.8 H774 V256.2 H732 Z" fill="#c77bf0"/>
<path d="M725.8 251.6 L732 243.6 H773 V259.6 H732 Z" fill="#f7e45a"/>
<path d="M725.8 250.8 L732 241.8 H773 V259.8 H732 Z" fill="#19e0f4"/><text x="733.8" y="254.9" textLength="26.5" lengthAdjust="spacingAndGlyphs" fill="#064a52" font-size="11.5">5.911</text>
<line x1="429.5" y1="86.5" x2="415.2" y2="282" stroke="#42a6c4" stroke-width="2.3"/>
<path d="M408.6 280.2 L421.2 281 L414.1 293 Z" fill="#42a6c4"/>
<line x1="679.8" y1="86.5" x2="712" y2="298" stroke="#42a6c4" stroke-width="2.3"/>
<path d="M706.4 298.6 L718.8 296.6 L714.3 309 Z" fill="#42a6c4"/>
</svg>
</body></html>
